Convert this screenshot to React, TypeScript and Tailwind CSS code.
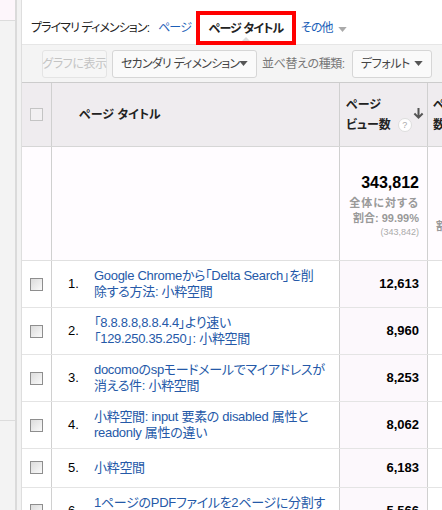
import React from "react";

// Rows of the report: title lines are split the way the original table wraps them.
const ROWS: { n: number; lines: string[]; views: string }[] = [
  { n: 1, lines: ["Google Chromeから「Delta Search」を削", "除する方法: 小粋空間"], views: "12,613" },
  { n: 2, lines: ["「8.8.8.8,8.8.4.4」より速い", "「129.250.35.250」: 小粋空間"], views: "8,960" },
  { n: 3, lines: ["docomoのspモードメールでマイアドレスが", "消える件: 小粋空間"], views: "8,253" },
  { n: 4, lines: ["小粋空間: input 要素の disabled 属性と", "readonly 属性の違い"], views: "8,062" },
  { n: 5, lines: ["小粋空間"], views: "6,183" },
  { n: 6, lines: ["1ページのPDFファイルを2ページに分割す", "る方法: 小粋空間"], views: "5,566" },
];

// palt gives the kana proportional widths, close to the narrow UI font of the original.
const FONT = "font-['Liberation_Sans','Noto_Sans_CJK_JP',sans-serif] [font-feature-settings:'palt']";

const Caret = ({ className = "" }: { className?: string }) => (
  <svg viewBox="0 0 10 6" className={`h-[5px] w-[9px] shrink-0 ${className}`} aria-hidden>
    <path d="M0 0h10L5 6Z" fill="currentColor" />
  </svg>
);

const Check = () => (
  <span className="block h-[13px] w-[13px] border border-[#8e8e8e] bg-gradient-to-br from-[#dcdcdc] to-[#fafafa]" />
);

export default function App() {
  return (
    <div className={`flex h-[510px] w-[442px] overflow-hidden whitespace-nowrap bg-white text-[12px] text-[#222] ${FONT}`}>
      {/* left rail with its shadowed edge */}
      <div className="flex w-[15px] shrink-0 flex-col bg-[#f3f3f3]">
        <div className="h-[21px] border-b border-[#dcdcdc] bg-[#fdf6fb]" />
        <div className="h-[400px] border-b border-[#dcdcdc]" />
      </div>
      <div className="w-[2px] shrink-0 bg-[#dadada]" />
      <div className="w-[5px] shrink-0 border-r border-[#dedede] bg-[#f2f2f2]" />

      <div className="flex min-w-0 flex-1 flex-col">
        {/* primary dimension bar */}
        <div className="relative z-10 flex h-[44px] shrink-0 items-end pl-[9px] tracking-[-0.9px]">
          <span className="mb-[7px] text-[#222]">プライマリ ディメンション:</span>
          <span className="mb-[7px] ml-[9px] text-[#1c5fb8]">ページ</span>
          <span className="relative -mb-[1px] ml-[5px] flex h-[34px] w-[100px] items-center justify-center border-[4px] border-[#ff0000] pt-[1px] font-bold">
            ページ タイトル
            <span className="absolute bottom-[0px] left-1/2 h-0 w-0 -translate-x-1/2 border-x-[4px] border-b-[4px] border-x-transparent border-b-[#dddddd]" />
          </span>
          <span className="mb-[7px] ml-[5px] text-[#1c5fb8]">その他</span>
          <Caret className="mb-[12px] ml-[5px] text-[#aaa]" />
        </div>

        {/* toolbar */}
        <div className="flex h-[38px] shrink-0 items-center gap-[5px] border-t border-[#e6e6e6] bg-[#f4f4f4] pl-[20px] tracking-[-0.4px]">
          <span className="flex h-[28px] w-[65px] shrink-0 items-center justify-center rounded-[3px] border border-[#e4e4e4] bg-[#f6f6f6] text-[#c4c4c4]">
            グラフに表示
          </span>
          <span className="flex h-[28px] w-[145px] shrink-0 items-center justify-between rounded-[3px] border border-[#d6d6d6] bg-[#fafafa] pl-[8px] pr-[8px] tracking-[-0.8px] text-[#444]">
            セカンダリ ディメンション
            <Caret className="text-[#555]" />
          </span>
          <span className="mr-[2px] shrink-0 text-[#777]">並べ替えの種類:</span>
          <span className="flex h-[28px] w-[80px] shrink-0 items-center justify-between rounded-[3px] border border-[#d6d6d6] bg-[#fafafa] pl-[8px] pr-[8px] text-[#444]">
            デフォルト
            <Caret className="text-[#555]" />
          </span>
        </div>

        {/* report table */}
        <div className="w-[520px] shrink-0 border-t border-[#cccccc]">
          <div className="flex h-[64px] border-b border-[#d6d6d6] bg-[#efecef]">
            <div className="flex w-[30px] items-center justify-center border-r border-[#d0d0d0]">
              <span className="block h-[13px] w-[13px] border border-[#c4c4c4] bg-[#f2f0f2]" />
            </div>
            <div className="flex w-[288px] items-center border-r border-[#d0d0d0] pl-[27px] font-bold">
              ページ タイトル
            </div>
            <div className="flex w-[88px] items-center justify-between border-r border-[#d0d0d0] pl-[6px] pr-[3px]">
              <div className="font-bold leading-[20px]">
                <div>ページ</div>
                <div className="flex items-center">
                  ビュー数
                  <span className="ml-[7px] flex h-[14px] w-[14px] items-center justify-center rounded-full border border-[#ddd] bg-white text-[9px] font-normal text-[#aaa]">
                    ?
                  </span>
                </div>
              </div>
              <svg viewBox="0 0 12 14" className="mb-[2px] h-[13px] w-[11px] text-[#555]" aria-hidden>
                <path d="M6 1v10M1.5 7 6 11.5 10.5 7" fill="none" stroke="currentColor" strokeWidth="2.2" />
              </svg>
            </div>
            <div className="flex-1 pl-[5px] pt-[12px] font-bold leading-[20px]">
              <div>ペ</div>
              <div>数</div>
            </div>
          </div>

          {/* totals */}
          <div className="flex h-[114px] border-b border-[#e0e0e0] bg-[#fffcff]">
            <div className="w-[30px] border-r border-[#d0d0d0]" />
            <div className="w-[288px] border-r border-[#d0d0d0]" />
            <div className="flex w-[88px] flex-col items-end border-r border-[#d0d0d0] pr-[8px] pt-[27px] text-right">
              <div className="text-[16px] font-bold leading-[18px] text-black">343,812</div>
              <div className="mt-[4px] text-[11px] font-bold leading-[15px] tracking-[1px] text-[#999]">全体に対する</div>
              <div className="text-[11px] font-bold leading-[15px] text-[#999]">割合: 99.99%</div>
              <div className="text-[9px] leading-[13px] text-[#aaa]">(343,842)</div>
            </div>
            <div className="flex-1 pl-[8px] pt-[71px] text-[11px] font-bold text-[#999]">割</div>
          </div>

          {ROWS.map((r) => (
            <div key={r.n} className="flex border-b border-[#e4e4e4] bg-white">
              <div className="flex w-[30px] items-center justify-center border-r border-[#d0d0d0]">
                <Check />
              </div>
              <div
                className={`flex w-[288px] items-center border-r border-[#d0d0d0] ${
                  r.lines.length > 1 ? "py-[7px]" : "py-[9px]"
                }`}
              >
                <span className="w-[42px] shrink-0 pl-[16px] text-[13px] text-black">{r.n}.</span>
                <span className="text-[13px] leading-[16px] tracking-[-0.3px] text-[#2559a8]">
                  {r.lines.map((l, i) => (
                    <span key={i} className="block">
                      {l}
                    </span>
                  ))}
                </span>
              </div>
              <div className="flex w-[88px] items-center justify-end border-r border-[#d0d0d0] bg-[#fcf8fc] pr-[8px] text-[13px] font-bold text-black">
                {r.views}
              </div>
              <div className="flex-1" />
            </div>
          ))}
        </div>
      </div>
    </div>
  );
}
